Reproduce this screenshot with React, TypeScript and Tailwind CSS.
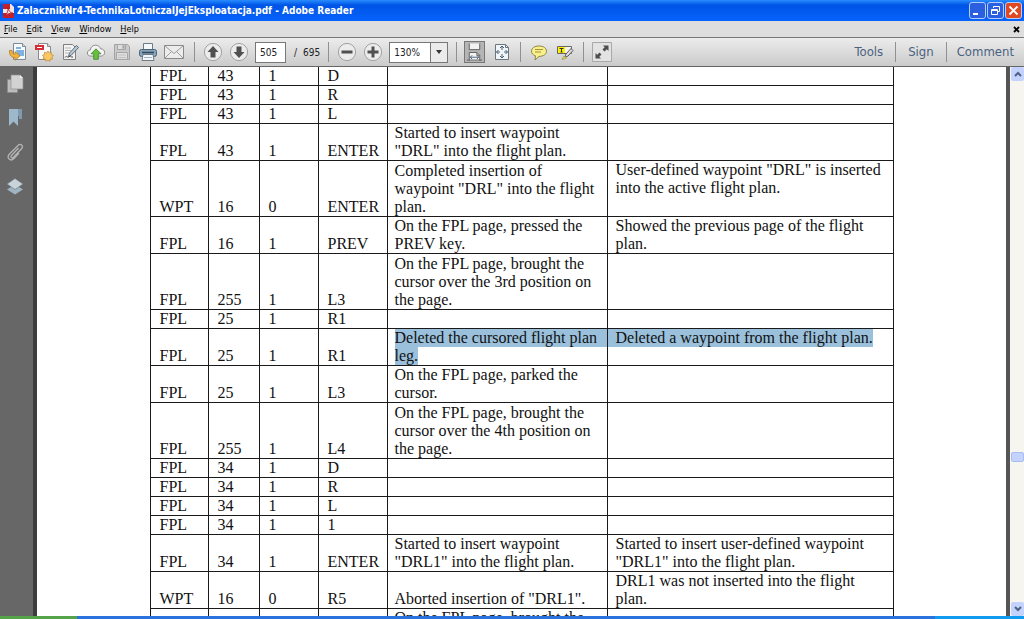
import type { ReactNode } from "react";

interface Row {
  page: string;
  code: string;
  flag: string;
  keyName: string;
  action?: string[];
  result?: string[];
  selected?: boolean;
}

const ROWS: Row[] = [
  { page: "FPL", code: "43", flag: "1", keyName: "D" },
  { page: "FPL", code: "43", flag: "1", keyName: "R" },
  { page: "FPL", code: "43", flag: "1", keyName: "L" },
  {
    page: "FPL", code: "43", flag: "1", keyName: "ENTER",
    action: ["Started to insert waypoint", "\"DRL\" into the flight plan."],
  },
  {
    page: "WPT", code: "16", flag: "0", keyName: "ENTER",
    action: ["Completed insertion of", "waypoint \"DRL\" into the flight", "plan."],
    result: ["User-defined waypoint \"DRL\" is inserted", "into the active flight plan."],
  },
  {
    page: "FPL", code: "16", flag: "1", keyName: "PREV",
    action: ["On the FPL page, pressed the", "PREV key."],
    result: ["Showed the previous page of the flight", "plan."],
  },
  {
    page: "FPL", code: "255", flag: "1", keyName: "L3",
    action: ["On the FPL page, brought the", "cursor over the 3rd position on", "the page."],
  },
  { page: "FPL", code: "25", flag: "1", keyName: "R1" },
  {
    page: "FPL", code: "25", flag: "1", keyName: "R1",
    action: ["Deleted the cursored flight plan", "leg."],
    result: ["Deleted a waypoint from the flight plan."],
    selected: true,
  },
  {
    page: "FPL", code: "25", flag: "1", keyName: "L3",
    action: ["On the FPL page, parked the", "cursor."],
  },
  {
    page: "FPL", code: "255", flag: "1", keyName: "L4",
    action: ["On the FPL page, brought the", "cursor over the 4th position on", "the page."],
  },
  { page: "FPL", code: "34", flag: "1", keyName: "D" },
  { page: "FPL", code: "34", flag: "1", keyName: "R" },
  { page: "FPL", code: "34", flag: "1", keyName: "L" },
  { page: "FPL", code: "34", flag: "1", keyName: "1" },
  {
    page: "FPL", code: "34", flag: "1", keyName: "ENTER",
    action: ["Started to insert waypoint", "\"DRL1\" into the flight plan."],
    result: ["Started to insert user-defined waypoint", "\"DRL1\" into the flight plan."],
  },
  {
    page: "WPT", code: "16", flag: "0", keyName: "R5",
    action: ["Aborted insertion of \"DRL1\"."],
    result: ["DRL1 was not inserted into the flight", "plan."],
  },
  {
    page: "", code: "", flag: "", keyName: "",
    action: ["On the FPL page, brought the"],
  },
];

const MENUS = ["File", "Edit", "View", "Window", "Help"];

function ToolButton({ label, children }: { label: string; children: ReactNode }) {
  return (
    <button type="button" aria-label={label} className="flex size-5 shrink-0 items-center justify-center">
      {children}
    </button>
  );
}

function Separator() {
  return <span className="h-5 w-px shrink-0 bg-[#909090]" />;
}

/* ─── Round arrow / zoom buttons share the same disc ─── */
function Disc({ d }: { d: string }) {
  return (
    <svg width="20" height="20" viewBox="0 0 20 20">
      <circle cx="10" cy="10" r="8.6" fill="#ececec" stroke="#a2a2a2" />
      <path d={d} fill="#505050" />
    </svg>
  );
}

function OpenIcon() {
  return (
    <svg width="20" height="20" viewBox="0 0 20 20">
      <path d="M5.5 1.5h9l3 3v13h-12z" fill="#f7fafd" stroke="#7d8b99" />
      <path d="M14.5 1.5v3h3" fill="#d5dde5" stroke="#7d8b99" />
      <path d="M8 5h5v2H8zM8 8h8v6H9z" fill="#7fb2e0" />
      <path d="M1.500 8.500c-.4 5 2 7 5.500 7v2.700l5-4.300-5-4.300v2.600c-2 0-3-1-3-3.700z" fill="#f0b440" stroke="#b9822a" strokeWidth=".9" />
    </svg>
  );
}

function CreatePdfIcon() {
  return (
    <svg width="20" height="20" viewBox="0 0 20 20">
      <path d="M4.500 1.500h9l3 3v13h-12z" fill="#f8f8f8" stroke="#8b8b8b" />
      <path d="M13.500 1.500v3h3" fill="#dcdcdc" stroke="#8b8b8b" />
      <rect x="1" y="3" width="9" height="5" fill="#d52d38" />
      <path d="M3 5.500h5" stroke="#fff" />
      <path d="M14 9l1.200 2 2.200-.7-.2 2.300 2.300.9-1.800 1.500 1 2.100-2.400.1-.6 2.200L14 18l-2 1.300-.7-2.200-2.200-.1.900-2.100-1.600-1.500 2.200-.9-.1-2.200 2.200.700z" fill="#f9c763" stroke="#c08a2e" strokeWidth=".7" />
    </svg>
  );
}

function EditIcon() {
  return (
    <svg width="20" height="20" viewBox="0 0 20 20">
      <path d="M3.500 2.500h9l3 3v12h-12z" fill="#f3f3f3" stroke="#808080" />
      <path d="M5 6h6M5 8.500h6M5 11h4" stroke="#b7b7b7" />
      <path d="M8.500 14.500l1-3.500 7-7.500 2 2-7 7.500z" fill="#b9cbd8" stroke="#4e5e6b" strokeWidth=".9" />
      <path d="M5 15.500c2-3 2 1 4-.8s1.500 1 4 .3" fill="none" stroke="#444" />
    </svg>
  );
}

function CloudIcon() {
  return (
    <svg width="22" height="20" viewBox="0 0 22 20">
      <path d="M5.500 14.500C2.800 14.500 1.500 13 1.500 11.200c0-2 1.500-3.300 3.300-3.400C5 4.500 7.500 2.500 10.500 2.500c2.700 0 4.800 1.500 5.400 4 2.800 0 4.600 1.700 4.600 4 0 2.400-1.700 4-4.200 4z" fill="#f4f4f4" stroke="#858585" />
      <path d="M11 6.500l5.500 5.500h-3v6h-5v-6h-3z" fill="#6abf3c" stroke="#37852a" strokeWidth=".9" />
    </svg>
  );
}

function SaveIcon() {
  return (
    <svg width="20" height="20" viewBox="0 0 20 20">
      <path d="M2.500 2.500h13l2 2v13h-15z" fill="#c9c9c9" stroke="#a3a3a3" />
      <path d="M5.500 2.500h8v5h-8zM4.500 10.500h11v7h-11z" fill="#dedede" stroke="#a6a6a6" />
      <path d="M10.500 3.500h2v3h-2zM6 13h8M6 15.500h8" fill="#a6a6a6" stroke="#bababa" strokeWidth=".8" />
    </svg>
  );
}

function PrintIcon() {
  return (
    <svg width="20" height="20" viewBox="0 0 20 20">
      <path d="M5.500 1.500h9v7h-9z" fill="#f5f8fa" stroke="#6d7b86" />
      <rect x="1.500" y="7.500" width="17" height="7" rx="2" fill="#86a5bd" stroke="#4b6478" />
      <path d="M4 10.500h12" stroke="#344a5b" strokeWidth="1.600" />
      <path d="M5 12.500h10l1 6H4z" fill="#f4f7fa" stroke="#6d7b86" />
      <path d="M6 15.500h8" stroke="#a2b2be" />
    </svg>
  );
}

function MailIcon() {
  return (
    <svg width="20" height="20" viewBox="0 0 20 20">
      <path d="M.5 3.500h19v13H.5z" fill="#ececec" stroke="#8a8a8a" />
      <path d="M1 4l9 7.500L19 4M1 16l6.500-6.500M19 16l-6.500-6.500" fill="none" stroke="#9c9c9c" />
    </svg>
  );
}

function FitWidthIcon() {
  return (
    <svg width="20" height="20" viewBox="0 0 20 20">
      <path d="M4.500 1v6.500h11V1" fill="#f2f2f2" stroke="#5f5f5f" />
      <path d="M4.500 19v-8.500h8l3 3V19" fill="#f2f2f2" stroke="#5f5f5f" />
      <path d="M12.500 10.500v3h3M2 18.500h16" fill="none" stroke="#5f5f5f" />
      <path d="M5.500 15.500h9M7.500 13.500l-2 2 2 2M12.500 13.500l2 2-2 2" fill="none" stroke="#48617a" />
    </svg>
  );
}

function FitPageIcon() {
  return (
    <svg width="20" height="20" viewBox="0 0 20 20">
      <path d="M3.500 2.500h10l3 3v12h-13z" fill="#f2f5f8" stroke="#6c7680" />
      <path d="M13.500 2.500v3h3" fill="none" stroke="#6c7680" />
      <path d="M8 6l2-2 2 2M10 4v4M8 14l2 2 2-2M10 16v-4M6.500 8l-2 2 2 2M4.500 10H8M13.500 8l2 2-2 2M15.500 10H12" fill="none" stroke="#48617a" />
    </svg>
  );
}

function NoteIcon() {
  return (
    <svg width="20" height="20" viewBox="0 0 20 20">
      <path d="M10 4c4.500 0 7.500 2.200 7.500 5.200s-3 5.200-7.500 5.200l-4 3.600.5-4.200C3.800 13 2.500 11.300 2.500 9.200 2.500 6.200 5.500 4 10 4z" fill="#f8f08c" stroke="#8d8347" />
      <path d="M6 7.500h8M6 10h6" stroke="#a19339" />
    </svg>
  );
}

function HighlightIcon() {
  return (
    <svg width="20" height="20" viewBox="0 0 20 20">
      <path d="M2.500 4.500h14v7h-14z" fill="#f4f4f4" stroke="#666" />
      <path d="M3 5h7v6H3z" fill="#fff200" />
      <path d="M4.500 6.500h4M6.500 6.500v3.500M5.500 10h2" stroke="#333" />
      <path d="M9.500 15.500l1.500-3.500 5-5.500 2 2-5 5.500z" fill="#dedede" stroke="#5b5b5b" />
      <path d="M7 17.500l2-3.500 2.500 2z" fill="#f1df31" stroke="#8d8347" strokeWidth=".6" />
    </svg>
  );
}

function FullscreenIcon() {
  return (
    <svg width="20" height="20" viewBox="0 0 20 20">
      <path d="M.5.5h19v19H.5z" fill="#e3e3e3" stroke="#a8a8a8" />
      <path d="M11 3.500h5.500V9l-1.700-1.700-2.300 2.200-2-2 2.200-2.300zM9 16.500H3.500V11l1.700 1.700 2.300-2.200 2 2-2.200 2.300z" fill="#4e4e4e" />
    </svg>
  );
}

function TitleBar() {
  const box = "flex size-[17px] items-center justify-center rounded-[3px] border border-[#b5cdfb]";
  return (
    <header className="flex h-[21px] shrink-0 items-center justify-between bg-linear-to-b from-[#2a8bff] via-[#0054e6] via-25% to-[#0663fc] pr-[2px] pl-[3px]">
      <div className="flex items-center gap-[3px]">
        <svg width="11" height="14" viewBox="0 0 11 14">
          <path d="M0 0h8l3 3v11H0z" fill="#f3e3e3" />
          <path d="M0 0h7v5H0zM0 9h11v5H0z" fill="#c3202a" />
          <path d="M1.500 11.500c2.500-1.500 4-4.500 3.500-8 1 4 2.500 5.500 5 5.700-3-.3-6 .8-8.500 2.300z" fill="#f3e3e3" stroke="#a8121b" strokeWidth=".8" />
        </svg>
        <h1 className="text-[10px] font-bold whitespace-nowrap text-white">
          ZalacznikNr4-TechnikaLotniczaIJejEksploatacja.pdf - Adobe Reader
        </h1>
      </div>
      <div className="flex gap-px">
        <button type="button" aria-label="Minimize" className={`${box} bg-[#2a60e0]`}>
          <svg width="11" height="11" viewBox="0 0 11 11"><path d="M1 8h5v2H1z" fill="#fff" /></svg>
        </button>
        <button type="button" aria-label="Restore" className={`${box} bg-[#2a60e0]`}>
          <svg width="11" height="11" viewBox="0 0 11 11"><path d="M3.500 3V1.500h6v5H8M1.500 4.500h6v5h-6zM1 5.500h6" fill="none" stroke="#fff" /></svg>
        </button>
        <button type="button" aria-label="Close" className={`${box} bg-[#df4a22]`}>
          <svg width="11" height="11" viewBox="0 0 11 11"><path d="M1.500 1.500l8 8M9.500 1.500l-8 8" stroke="#fff" strokeWidth="1.800" /></svg>
        </button>
      </div>
    </header>
  );
}

function MenuBar() {
  return (
    <nav className="flex h-4 shrink-0 items-center justify-between bg-[#dedede] px-1">
      <div className="flex gap-[9px] text-[9px] leading-4 text-black">
        {MENUS.map((menu) => (
          <button key={menu} type="button">
            <span className="underline">{menu[0]}</span>
            {menu.slice(1)}
          </button>
        ))}
      </div>
      <button type="button" aria-label="Close document">
        <svg width="7" height="7" viewBox="0 0 7 7"><path d="M1 1l5 5M6 1L1 6" stroke="#000" strokeWidth="1.800" /></svg>
      </button>
    </nav>
  );
}

function Toolbar() {
  return (
    <div className="flex h-[30px] shrink-0 items-center justify-between border-t border-b border-t-[#777] border-b-[#666] bg-linear-to-b from-[#ececec] to-[#cbcbcb] pl-2 text-[#222]">
      <div className="flex items-center gap-[6px]">
        <ToolButton label="Open"><OpenIcon /></ToolButton>
        <ToolButton label="Create PDF"><CreatePdfIcon /></ToolButton>
        <ToolButton label="Edit"><EditIcon /></ToolButton>
        <ToolButton label="Upload"><CloudIcon /></ToolButton>
        <ToolButton label="Save"><SaveIcon /></ToolButton>
        <ToolButton label="Print"><PrintIcon /></ToolButton>
        <ToolButton label="Email"><MailIcon /></ToolButton>
        <div className="flex items-center gap-2 pl-1">
          <Separator />
          <div className="flex gap-[6px]">
            <ToolButton label="Previous page"><Disc d="M10 4l5.500 6H12.500v5.500h-5V10H4.500z" /></ToolButton>
            <ToolButton label="Next page"><Disc d="M10 16l5.500-6H12.500V4.500h-5V10H4.500z" /></ToolButton>
          </div>
        </div>
        <input
          aria-label="Page"
          defaultValue="505"
          className="h-[21px] w-[31px] border border-[#777] bg-white pl-1 text-[10px]"
        />
        <span className="flex gap-[6px] px-[2px] text-[10px]">
          <span>/</span>
          <span>695</span>
        </span>
        <Separator />
        <div className="flex gap-[6px] pl-[2px]">
          <ToolButton label="Zoom out"><Disc d="M4.500 8.500h11v3h-11z" /></ToolButton>
          <ToolButton label="Zoom in"><Disc d="M8.500 4.500h3v4h4v3h-4v4h-3v-4h-4v-3h4z" /></ToolButton>
        </div>
        <div className="flex h-[21px] w-[59px] border border-[#777] bg-white">
          <input aria-label="Zoom" defaultValue="130%" className="w-10 min-w-0 pl-1 text-[10px]" />
          <button type="button" aria-label="Zoom levels" className="flex flex-1 items-center justify-center border-l border-[#777] bg-[#ebebeb]">
            <svg width="6" height="4" viewBox="0 0 6 4"><path d="M0 0h6L3 4z" fill="#333" /></svg>
          </button>
        </div>
        <div className="flex items-center gap-[7px] pl-[2px]">
          <Separator />
          <button type="button" aria-label="Fit width" className="flex h-[22px] w-[21px] items-center justify-center border border-[#777] bg-[#b5b5b5]">
            <FitWidthIcon />
          </button>
          <ToolButton label="Fit page"><FitPageIcon /></ToolButton>
        </div>
        <div className="flex items-center gap-2 pl-[2px]">
          <Separator />
          <div className="flex gap-[6px]">
            <ToolButton label="Sticky note"><NoteIcon /></ToolButton>
            <ToolButton label="Highlight text"><HighlightIcon /></ToolButton>
          </div>
          <Separator />
          <ToolButton label="Full screen"><FullscreenIcon /></ToolButton>
        </div>
      </div>
      <div className="flex items-center text-[13px] text-[#4b6280]">
        <button type="button" className="px-3">Tools</button>
        <Separator />
        <button type="button" className="px-3">Sign</button>
        <Separator />
        <button type="button" className="px-[10px]">Comment</button>
      </div>
    </div>
  );
}

function Sidebar() {
  return (
    <aside className="flex w-[37px] shrink-0 flex-col items-center gap-[14px] border-r-4 border-[#3c3c3c] bg-[#676767] pt-[7px] pr-1">
      <ToolButton label="Page thumbnails">
        <svg width="18" height="20" viewBox="0 0 18 20">
          <path d="M1.500 5.500h10v13h-10z" fill="#bdbdbd" stroke="#8d8d8d" />
          <path d="M5 1h9l3 3v11H5z" fill="#d2d2d2" stroke="#8f8f8f" strokeWidth=".7" />
          <path d="M14 1v3h3" fill="#f1f1f1" />
        </svg>
      </ToolButton>
      <ToolButton label="Bookmarks">
        <svg width="18" height="20" viewBox="0 0 18 20">
          <path d="M10 1h6v10h-3V8h-3z" fill="#7f9bb0" />
          <path d="M3 1h9v17l-4.500-4.500L3 18z" fill="#9eb8cb" />
        </svg>
      </ToolButton>
      <ToolButton label="Attachments">
        <svg width="18" height="20" viewBox="0 0 18 20">
          <path d="M12.500 6l-7 7.500c-1.500 1.700.5 3.300 2 1.800l8-8.500c2.500-3-1-6-3.500-3.300L3.500 12c-3.500 4 1 8 4.500 4.500l5-5.500" fill="none" stroke="#b4b4b4" strokeWidth="1.300" />
        </svg>
      </ToolButton>
      <ToolButton label="Layers">
        <svg width="18" height="20" viewBox="0 0 18 20">
          <path d="M1 13.500l8-5 8 5-8 5z" fill="#9fb4c3" />
          <path d="M1 8l8-5.500L17 8l-8 5.500z" fill="#c9d3da" stroke="#67737c" strokeWidth=".6" />
        </svg>
      </ToolButton>
    </aside>
  );
}

function Lines({ lines, selected }: { lines?: string[]; selected?: boolean }) {
  if (!lines) return null;
  return (
    <>
      {lines.map((line, i) => (
        <div key={line} className="whitespace-nowrap">
          {/* the first marked line runs on to the cell border */}
          {selected ? (
            <span className={i === 0 ? "block bg-[#9ac0dc]" : "inline-block bg-[#9ac0dc]"}>
              {line}
            </span>
          ) : (
            line
          )}
        </div>
      ))}
    </>
  );
}

function ManualTable() {
  const cell = "border border-[#1a1a1a] p-0 pl-[9px] align-bottom";
  const wideCell = "border border-[#1a1a1a] p-0 pl-[7px] align-bottom";
  return (
    <table className="mx-auto -mt-px w-[744px] table-fixed border-collapse font-['Liberation_Serif',serif] text-[16px] leading-[18px] text-[#111]">
      <colgroup>
        <col className="w-[58px]" />
        <col className="w-[51px]" />
        <col className="w-[59px]" />
        <col className="w-[69px]" />
        <col className="w-[220px]" />
        <col />
      </colgroup>
      <tbody>
        {ROWS.map((row, i) => (
          <tr key={i} className={row.action?.length === 3 ? "h-14" : "h-[19px]"}>
            <td className={cell}>{row.page}</td>
            <td className={cell}>{row.code}</td>
            <td className={cell}>{row.flag}</td>
            <td className={cell}>{row.keyName}</td>
            <td className={wideCell}>
              <Lines lines={row.action} selected={row.selected} />
            </td>
            <td className="border border-[#1a1a1a] p-0 align-top">
              {row.selected ? (
                <span className="inline-block bg-[#9ac0dc] pl-2">{row.result}</span>
              ) : (
                <div className="pl-2"><Lines lines={row.result} /></div>
              )}
            </td>
          </tr>
        ))}
      </tbody>
    </table>
  );
}

function Scrollbar() {
  const arrow = "flex h-3.5 w-full items-center justify-center rounded-[2px] bg-[#c3d3fd]";
  return (
    <div className="flex w-[14px] shrink-0 flex-col bg-[#f6f5f0] pl-px">
      <button type="button" aria-label="Scroll up" className={arrow}>
        <svg width="8" height="6" viewBox="0 0 8 6"><path d="M1 5l3-3 3 3" fill="none" stroke="#4d6185" strokeWidth="2" /></svg>
      </button>
      <div className="flex-[371]" />
      <div className="h-[10px] rounded-[2px] border border-[#a9bdf2] bg-[#c3d3fd]" />
      <div className="flex-[140]" />
      <button type="button" aria-label="Scroll down" className={arrow}>
        <svg width="8" height="6" viewBox="0 0 8 6"><path d="M1 1l3 3 3-3" fill="none" stroke="#4d6185" strokeWidth="2" /></svg>
      </button>
    </div>
  );
}

export default function App() {
  return (
    <div className="flex h-screen flex-col overflow-hidden font-['DejaVu_Sans_Condensed','DejaVu_Sans',sans-serif]">
      <TitleBar />
      <MenuBar />
      <Toolbar />
      <div className="flex min-h-0 flex-1">
        <Sidebar />
        <main className="min-w-0 flex-1 overflow-hidden bg-white">
          <ManualTable />
        </main>
        <div className="w-[4px] shrink-0 bg-[#555]" />
        <Scrollbar />
      </div>
      <footer className="flex h-[3px] shrink-0">
        <div className="w-[77px] bg-[#55a44a]" />
        <div className="flex-1 bg-[#2a72de]" />
        <div className="w-[89px] bg-[#109af0]" />
      </footer>
    </div>
  );
}
